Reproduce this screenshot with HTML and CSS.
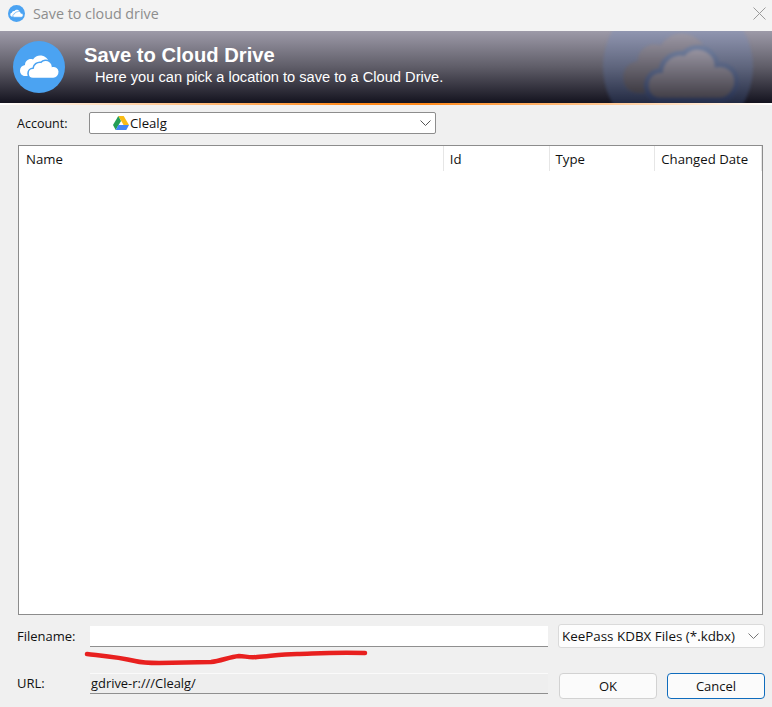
FILE: index.html

```html
<!DOCTYPE html>
<html lang="en">
<head>
    <meta charset="UTF-8">
    <title>Save to cloud drive</title>
    <link rel="stylesheet" href="styles.css">
</head>
<body>
    <svg width="0" height="0" class="defs">
        <defs>
            <linearGradient id="markCloud" x1="0" y1="0" x2="0" y2="1">
                <stop offset="0" stop-color="#9b97a4"/>
                <stop offset="1" stop-color="#3e3b43"/>
            </linearGradient>
            <linearGradient id="markGap" x1="0" y1="0" x2="0" y2="1">
                <stop offset="0" stop-color="#6f7d9c"/>
                <stop offset="1" stop-color="#273150"/>
            </linearGradient>
            <path id="cloudBack" d="M12 35c-3 0-5-2.500-5-5.500 0-3 2-5 5-5.500 0-4 4-7 8-5.500 2-3 5-4.500 8.500-4 3.500.5 6.500 3 7.500 6.500 1 3 0 6-3 8L20 35z"/>
            <path id="cloudFront" d="M20 37.500c-3 0-5-2.300-5-5 0-3 2.200-5.200 5-5.200.5-3.800 4-6.500 8-6 2-2.300 6-2.800 8.500-1 1.800 1.200 3 3 3 5 3.500-.5 6.500 1.800 6.800 5.200.2 4-2.800 7-6 7z"/>
        </defs>
    </svg>

    <div class="titlebar">
        <svg class="title-icon" viewBox="0 0 52 52" width="17" height="17">
            <circle cx="26" cy="26" r="26" fill="#4ba3f2"/>
            <use href="#cloudBack" fill="#fff"/>
            <use href="#cloudFront" fill="#fff" stroke="#4ba3f2" stroke-width="2"/>
        </svg>
        <span class="title-text">Save to cloud drive</span>
        <svg class="close-icon" viewBox="0 0 13 13" width="13" height="13">
            <path d="M.5.5l12 12M12.5.5l-12 12" stroke="#9a9a9a" stroke-width="1" fill="none"/>
        </svg>
    </div>

    <div class="banner">
        <svg class="banner-icon" viewBox="0 0 52 52" width="52" height="52">
            <circle cx="26" cy="26" r="26" fill="#4ba3f2"/>
            <use href="#cloudBack" fill="#fff"/>
            <use href="#cloudFront" fill="#fff" stroke="#4ba3f2" stroke-width="1.600"/>
        </svg>
        <div class="banner-text">
            <div class="banner-title">Save to Cloud Drive</div>
            <div class="banner-sub">Here you can pick a location to save to a Cloud Drive.</div>
        </div>
        <svg class="banner-mark" viewBox="0 0 52 52" width="150" height="150">
            <circle cx="26" cy="26" r="26" fill="#5f86d2" opacity="0.2"/>
            <use href="#cloudBack" fill="url(#markCloud)"/>
            <use href="#cloudFront" fill="url(#markCloud)" stroke="url(#markGap)" stroke-width="1.600"/>
        </svg>
    </div>
    <div class="accent"></div>

    <div class="content">
        <div class="account-row">
            <label class="label">Account:</label>
            <div class="account-combo">
                <svg viewBox="0 0 16 14" width="16" height="14" class="drive-icon">
                    <path d="M5.300 0h5.400l5.300 9h-5.400z" fill="#f9bc15"/>
                    <path d="M5.300 0L0 9l2.700 5 5.300-9z" fill="#239e55"/>
                    <path d="M5.400 9H16l-2.700 5H2.700z" fill="#4285f4"/>
                </svg>
                <span>Clealg</span>
                <svg class="chevron" viewBox="0 0 11 6" width="11" height="6"><path d="M.5.5l5 5 5-5" fill="none" stroke="#555"/></svg>
            </div>
        </div>

        <div class="list">
            <div class="list-head">
                <div class="col col-name">Name</div>
                <div class="col col-id">Id</div>
                <div class="col col-type">Type</div>
                <div class="col col-date">Changed Date</div>
            </div>
        </div>

        <div class="form">
            <div class="filename-row">
                <label class="label form-label">Filename:</label>
                <div class="field filename"></div>
                <div class="filter">
                    <span>KeePass KDBX Files (*.kdbx)</span>
                    <svg class="chevron" viewBox="0 0 11 6" width="11" height="6"><path d="M.5.5l5 5 5-5" fill="none" stroke="#777"/></svg>
                </div>
            </div>
            <div class="url-row">
                <label class="label form-label">URL:</label>
                <div class="field url">gdrive-r:///Clealg/</div>
                <div class="buttons">
                    <button class="btn">OK</button>
                    <button class="btn btn-cancel">Cancel</button>
                </div>
            </div>
        </div>
    </div>

    <!-- red marker scribble drawn over the dialog -->
    <svg class="scribble" viewBox="0 0 772 707" width="772" height="707">
        <path d="M87 654c18 2 32 3 48 7 8 2 14 2 24 2l52-1c10-1 18-5 28-6 6 0 10 2 18 1 14-1 24-3 40-3 14 0 30-2 68-1" fill="none" stroke="#e8201f" stroke-width="4.500" stroke-linecap="round"/>
    </svg>
</body>
</html>
```

FILE: styles.css

```css
* {
    box-sizing: border-box;
}
html, body {
    height: 100%;
}
body {
    margin: 0;
    background: #f0f0f0;
    color: #111;
    font-family: 'Open Sans', 'Liberation Sans', sans-serif;
    font-size: 13px;
    overflow: hidden;
    position: relative;
}
.defs {
    position: absolute;
}
.titlebar {
    height: 31px;
    background: #f3f3f3;
    display: flex;
    align-items: center;
    padding: 0 6px 5px 8px;
}
.title-icon {
    margin-right: 8px;
}
.title-text {
    color: #8d8d8d;
    font-size: 14.300px;
    flex: 1;
}
.banner {
    height: 72px;
    background: linear-gradient(to bottom, #9d9aa8, #5f5d68 50%, #14131f);
    display: flex;
    align-items: center;
    padding-left: 13px;
    position: relative;
    overflow: hidden;
}
.banner-text {
    margin-left: 19px;
    margin-top: -5px;
    color: #fff;
    font-family: 'Liberation Sans', sans-serif;
}
.banner-title {
    font-size: 20.200px;
    font-weight: bold;
    line-height: 24px;
}
.banner-sub {
    font-size: 14.650px;
    line-height: 20px;
    padding-left: 11px;
}
.banner-mark {
    position: absolute;
    left: 603px;
    top: -39px;
    filter: blur(1.500px);
}
.accent {
    height: 2px;
    background: linear-gradient(to right, #fff, #ff8a1c 45%, #ff8a1c 55%, #fff);
}
.content {
    padding: 7px 7px 0 17px;
}
.account-row {
    display: flex;
    align-items: center;
    height: 22px;
}
.label {
    font-size: 12.500px;
}
.account-row .label {
    width: 72px;
    padding-top: 1px;
}
.account-combo {
    width: 347px;
    height: 22px;
    background: #fff;
    border: 1px solid #8d8d8d;
    border-radius: 2px;
    display: flex;
    align-items: center;
    padding-left: 23px;
    font-size: 13.200px;
}
.drive-icon {
    margin-right: 1px;
}
.account-combo span {
    flex: 1;
}
.account-combo .chevron {
    margin-right: 4px;
}
.list {
    margin: 11px 2px 0 1px;
    height: 470px;
    background: #fff;
    border: 1px solid #8c8c8c;
}
.list-head {
    display: flex;
    height: 25px;
}
.col {
    padding: 4px 0 0 6px;
    border-right: 1px solid #e6e6e6;
    font-size: 13.200px;
}
.col-name {
    width: 426px;
    padding-left: 7px;
}
.col-id, .col-type {
    width: 106px;
}
.col-date {
    width: 107px;
}
.form-label {
    width: 73px;
    font-size: 13px;
}
.filename-row {
    display: flex;
    align-items: center;
    margin-top: 9px;
    height: 24px;
}
.field {
    height: 21px;
    width: 458px;
    border-bottom: 1px solid #8f8f8f;
}
.filename {
    background: #fff;
}
.url {
    background: #eeeeee;
    border-top: 1px solid #fafafa;
    padding: 0 0 0 1px;
    line-height: 19px;
    font-size: 12.900px;
}
.filter {
    margin-left: 10px;
    width: 207px;
    height: 24px;
    background: #fdfdfd;
    border: 1px solid #dadada;
    border-radius: 3px;
    display: flex;
    align-items: center;
    padding: 0 4px 0 3px;
    font-size: 13.400px;
    justify-content: space-between;
}
.filter .chevron {
    margin-right: 1px;
}
.url-row {
    display: flex;
    align-items: flex-start;
    margin-top: 25px;
}
.url-row .form-label {
    line-height: 21px;
}
.buttons {
    display: flex;
    gap: 10px;
    margin-left: 11px;
}
.btn {
    width: 98px;
    height: 26px;
    background: #fbfbfb;
    border: 1px solid #d2d2d2;
    border-radius: 4px;
    font-family: inherit;
    font-size: 13px;
    color: #111;
    padding: 0;
}
.btn-cancel {
    border: 1px solid #0f6cbd;
}
.scribble {
    position: absolute;
    left: 0;
    top: 0;
    pointer-events: none;
}
```
